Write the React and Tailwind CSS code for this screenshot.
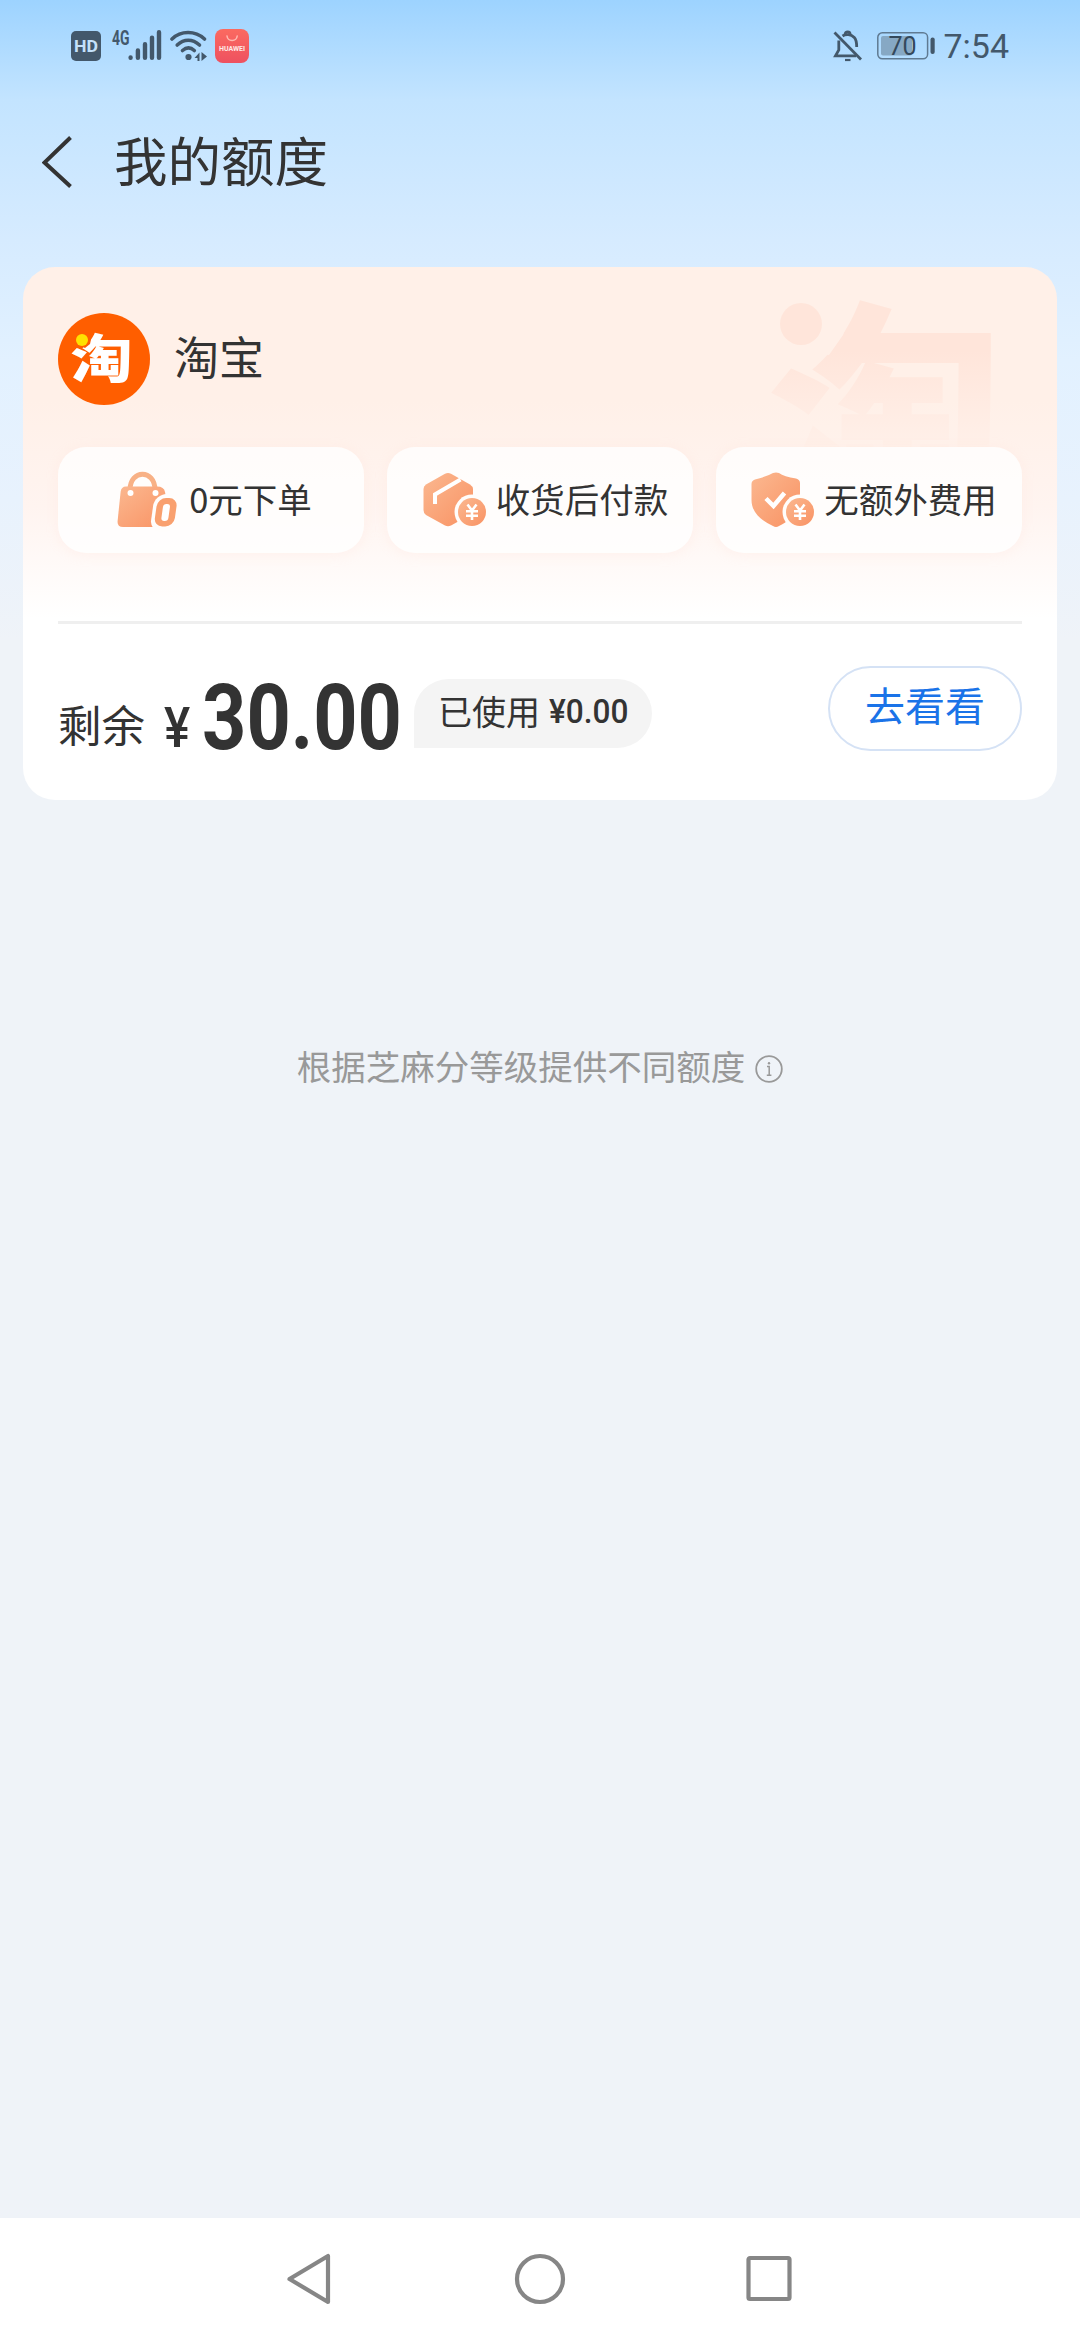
const ORANGE = 'url(#peach)';

const HdIcon = () => (
  <svg width="30" height="30" viewBox="0 0 30 30">
    <rect width="30" height="30" rx="5" fill="#43586b" />
    <text x="15" y="20.8" fontSize="16" fontWeight="700" textAnchor="middle" textLength="24" lengthAdjust="spacingAndGlyphs" fill="#c3e1fa" fontFamily="Roboto, sans-serif">HD</text>
  </svg>
);

const SignalIcon = () => (
  <svg className="overflow-visible" width="50" height="33" viewBox="0 0 50 33">
    <text x="0" y="15.5" fontSize="20" fontWeight="700" textLength="17.5" lengthAdjust="spacingAndGlyphs" fill="#43586b" fontFamily="Roboto, sans-serif">4G</text>
    <g stroke="#43586b" strokeWidth="4.4" strokeLinecap="round">
      <path d="M18.6 28.4v.4M25.9 21.5v7.3M33 15.2v13.6M40 8.6v20.2M47 3.2v25.6" />
    </g>
  </svg>
);

const WifiIcon = () => (
  <svg width="37" height="32" viewBox="0 0 37 32">
    <g fill="none" stroke="#43586b" strokeWidth="3.6" strokeLinecap="round">
      <path d="M2 9C11 .4 25 .4 34.5 9" />
      <path d="M7.2 15C14 8.700 22.500 8.700 29.500 15" />
      <path d="M12.500 20.500C16.500 17 20.500 17 24.300 20.500" />
    </g>
    <circle cx="18.500" cy="27" r="3.100" fill="#43586b" />
    <path d="M29.500 22.500v8.500h-2v-3h-3zM31.500 22l5.500 4.500-5.500 4.500z" fill="#43586b" />
  </svg>
);

const HuaweiIcon = () => (
  <svg width="34" height="34" viewBox="0 0 34 34">
    <defs>
      <linearGradient id="hw" x1="0" y1="0" x2="0" y2="1">
        <stop offset="0" stopColor="#fb6a60" />
        <stop offset="1" stopColor="#ee5160" />
      </linearGradient>
    </defs>
    <rect width="34" height="34" rx="8" fill="url(#hw)" />
    <path d="M12 7c.8 6 9.400 6 10.200 0" fill="none" stroke="#ffb9b0" strokeWidth="1.500" strokeLinecap="round" />
    <text x="17" y="22.300" fontSize="6.300" fontWeight="700" textAnchor="middle" textLength="26" lengthAdjust="spacingAndGlyphs" fill="#ffe9e6" fontFamily="Roboto, sans-serif">HUAWEI</text>
  </svg>
);

const BellOffIcon = () => (
  <svg width="30" height="32" viewBox="0 0 30 32" fill="none" stroke="#43586b" strokeWidth="2.800">
    <path d="M1.500 2.500l26.500 27" />
    <path d="M5.800 10.500v9.500L2.500 25.800H23" />
    <path d="M9.500 6C12.500 4 18 4 21.300 7.500c2.400 2.600 2.400 6 2.400 9.500" />
    <path d="M12 4.800c0-4 5.200-4 5.200 0" />
    <path d="M12 30h5.500" strokeWidth="2.200" />
  </svg>
);

const BatteryIcon = () => (
  <svg width="59" height="28" viewBox="0 0 59 28">
    <rect x=".8" y=".8" width="49.800" height="26" rx="4.500" fill="none" stroke="#5f7a92" strokeWidth="1.500" />
    <rect x="4" y="4" width="31" height="19.600" rx="2" fill="#86a8c4" />
    <text x="25.500" y="22.500" fontSize="25" textAnchor="middle" fill="#34495c" fontFamily="Roboto, sans-serif">70</text>
    <rect x="53.500" y="5.500" width="4.200" height="16.500" rx="2" fill="#43586b" />
  </svg>
);

const StatusBar = () => (
  <div className="flex h-[91px] items-center justify-between pl-[71px] pr-[71px]">
    <div className="flex items-center">
      <HdIcon />
      <div className="ml-[11px]"><SignalIcon /></div>
      <div className="ml-[8px]"><WifiIcon /></div>
      <div className="ml-[8px]"><HuaweiIcon /></div>
    </div>
    <div className="flex items-center">
      <BellOffIcon />
      <div className="ml-[14px]"><BatteryIcon /></div>
      <span className="ml-[7px] font-[Roboto,sans-serif] text-[34px] leading-[40px] text-[#43586b]">7:54</span>
    </div>
  </div>
);

const Header = () => (
  <header className="flex h-[141px] items-center pl-[42px]">
    <svg width="30" height="52" viewBox="0 0 30 52" fill="none" stroke="#333" strokeWidth="4">
      <path d="M28.500 1.500L2.500 26.500l26 24" />
    </svg>
    <h1 className="ml-[42px] pb-[5px] text-[53.500px] leading-[70px] text-[#333]">我的额度</h1>
  </header>
);

// Coin with the yuan sign, shared by the box and shield icons
const Coin = () => (
  <g>
    <circle cx="49" cy="40" r="17.500" fill="#fffdfb" />
    <circle cx="49" cy="40" r="14" fill={ORANGE} />
    <path d="M44.500 32.500L49 38.500l4.500-6M49 38.500V48M43 39.300h12M43 43.800h12" fill="none" stroke="#fff" strokeWidth="2.600" />
  </g>
);

const BagIcon = () => (
  <svg className="overflow-visible" width="60" height="58" viewBox="0 0 60 58">
    <path d="M13 19C13 -2 38 -2 38 19" fill="none" stroke="#f8b186" strokeWidth="5" />
    <path d="M9 15.500H40Q47 15.500 48 21L53 50Q54 56 48 56H6Q0 56 .6 50L3.600 21Q4.200 15.500 9 15.500z" fill={ORANGE} />
    <circle cx="13.500" cy="22" r="3" fill="#fff" />
    <circle cx="38.500" cy="22" r="3" fill="#fff" />
    <g transform="skewX(-8) translate(5.500 0)">
      <rect x="35.500" y="23" width="27" height="38" rx="12" fill="#fffdfc" />
      <rect x="39" y="27" width="20" height="28.500" rx="8.500" fill="#f9a06f" />
      <rect x="45.500" y="33" width="7" height="17" rx="3.200" fill="#fff" />
    </g>
  </svg>
);

const BoxIcon = () => (
  <svg width="65" height="56" viewBox="0 0 65 56">
    <path d="M22 1.800Q25 .2 28 1.800L47 12.500Q50 14.500 50 17V38Q50 41 47 43L28 53.500Q25 55 22 53.500L3 43Q.5 41.500 .5 38V17Q.5 14 3 12.500z" fill={ORANGE} />
    <path d="M12 32V22.500L37.500 7.500" fill="none" stroke="#fff" strokeWidth="4" />
    <Coin />
  </svg>
);

const ShieldIcon = () => (
  <svg width="65" height="56" viewBox="0 0 65 56">
    <path d="M22 1Q25 0 28 1Q33 4.500 45 6.500Q49 7.500 49 11V28C49 41 38 49 28 54Q25 56 22 54C11 49 .5 41 .5 28V12Q.5 8.500 4 7.500Q16 4.500 22 1z" fill={ORANGE} />
    <path d="M15 26.500l7.500 7.500L33.500 21" fill="none" stroke="#fff" strokeWidth="4.500" />
    <Coin />
  </svg>
);

const perks = [
  { label: '0元下单', icon: <BagIcon />, spacing: 'gap-[12px] pl-[7px]' },
  { label: '收货后付款', icon: <BoxIcon />, spacing: 'gap-[8px] pl-[11px]' },
  { label: '无额外费用', icon: <ShieldIcon />, spacing: 'gap-[8px] pl-[10px]' },
];

const TaobaoLogo = () => (
  <svg width="92" height="92" viewBox="0 0 92 92">
    <circle cx="46" cy="46" r="46" fill="#ff5e00" />
    <text x="12.500" y="64.500" fontSize="52" fontWeight="900" textLength="62" lengthAdjust="spacingAndGlyphs" fill="#fff" fontFamily="'Noto Sans CJK SC', sans-serif">淘</text>
    <path d="M12 28L20 17L34 22L32 31L27 35z" fill="#ff5e00" />
    <circle cx="24" cy="27" r="6" fill="#ffe100" />
  </svg>
);

const CreditCard = () => (
  <section className="relative mx-[23px] mt-[35px] h-[533px] overflow-hidden rounded-[32px] bg-linear-to-b from-[#fff0e8] from-25% via-[#fff4f0] via-45% to-white to-66% px-[35px]">
    {/* Faded brand mark behind the perks */}
    <svg className="absolute left-[740px] top-[20px]" width="250" height="160" viewBox="0 0 250 160">
      <defs>
        <linearGradient id="mark" x1="0" y1="0" x2="0" y2="160" gradientUnits="userSpaceOnUse">
          <stop offset=".4" stopColor="#ffe5da" />
          <stop offset="1" stopColor="#fff0e9" />
        </linearGradient>
      </defs>
      <text x="4" y="216" fontSize="236" fontWeight="900" fill="url(#mark)" fontFamily="'Noto Sans CJK SC', sans-serif">淘</text>
      <path d="M10 40L44 8L86 32L80 48L66 68L48 66z" fill="#fff0e8" />
      <circle cx="38" cy="37" r="21" fill="#ffe5da" />
    </svg>

    <div className="relative flex items-center pt-[46px]">
      <TaobaoLogo />
      <h2 className="ml-[24px] pb-[7px] text-[45px] leading-[60px] text-[#333]">淘宝</h2>
    </div>

    {/* Perks */}
    <div className="relative mt-[42px] grid grid-cols-3 gap-[23px]">
      {perks.map((perk) => (
        <div
          key={perk.label}
          className={`flex h-[106px] items-center justify-center rounded-[28px] bg-white/80 shadow-[0_2px_12px_rgba(255,225,210,0.25)] ${perk.spacing}`}
        >
          {perk.icon}
          <span className="whitespace-nowrap pb-[5px] text-[34.500px] leading-[44px] text-[#333]">{perk.label}</span>
        </div>
      ))}
    </div>

    <div className="mt-[68px] h-[3px] bg-[#efefef]" />

    {/* Balance */}
    <div className="mt-[42px] flex h-[85px] justify-between">
      <div className="flex items-end">
        <span className="mb-[5px] shrink-0 text-[43.500px] leading-[44px] text-[#333]">剩余</span>
        <span className="-mb-[6px] ml-[19px] inline-block w-[28px] shrink-0 origin-left scale-x-[0.88] font-[Roboto,sans-serif] text-[56px] font-medium leading-[58px] text-[#333]">¥</span>
        <span className="-mb-[9px] ml-[10px] inline-block w-[211px] shrink-0 origin-left scale-x-[0.85] font-[Roboto,sans-serif] text-[91px] font-bold leading-[84px] text-[#333]">30.00</span>
        <div className="mb-[3px] ml-px flex h-[69px] w-[238px] shrink-0 items-center rounded-full rounded-bl-none bg-[#f4f4f4] pb-[5px] pl-[24px]">
          <span className="whitespace-nowrap text-[34px] leading-[44px] text-[#333]">已使用</span>
          <span className="ml-[9px] inline-block origin-left scale-x-[0.93] font-[Roboto,sans-serif] text-[34px] font-medium leading-[44px] text-[#333]">¥0.00</span>
        </div>
      </div>
      <button className="w-[194px] rounded-full border-2 border-[#d5e2f5] pb-[9px] text-[40px] leading-[44px] text-[#1a73e8]">去看看</button>
    </div>
  </section>
);

const Hint = () => (
  <div className="mt-[239px] flex items-center justify-center gap-[10px] text-[#999]">
    <span className="text-[34.500px] leading-[52px]">根据芝麻分等级提供不同额度</span>
    <svg className="mt-[7px]" width="28" height="28" viewBox="0 0 28 28" fill="none" stroke="#999" strokeWidth="1.800">
      <circle cx="14" cy="14" r="12.800" />
      <path d="M12 11.500h2.200V20M11.800 20.200h4.600" strokeWidth="1.500" />
      <circle cx="14" cy="8.300" r="1.200" fill="#999" stroke="none" />
    </svg>
  </div>
);

const NavBar = () => (
  <nav className="mt-auto flex h-[122px] items-center justify-center bg-white">
    <svg width="506" height="52" viewBox="0 0 506 52" fill="none" stroke="#868686" strokeWidth="4.200" strokeLinejoin="round">
      <path d="M41 3v46L2.500 26z" />
      <circle cx="253" cy="26" r="23" />
      <rect x="461.500" y="5" width="41" height="41" rx="1.500" />
    </svg>
  </nav>
);

const App = () => {
  return (
    <div className="flex h-[2340px] w-[1080px] flex-col bg-[#eff3f8] bg-[linear-gradient(180deg,#9dd3ff_0px,#c3e4ff_100px,#d6ebff_240px,#e2f1ff_360px,#e8f2fd_500px,#eff3f8_640px)] font-['Noto_Sans_CJK_SC',sans-serif]">
      {/* Shared gradient for the perk icons */}
      <svg width="0" height="0" className="absolute">
        <defs>
          <linearGradient id="peach" x1="0" y1="0" x2="1" y2="1">
            <stop offset="0" stopColor="#fbb890" />
            <stop offset="1" stopColor="#f99263" />
          </linearGradient>
        </defs>
      </svg>

      <StatusBar />
      <Header />
      <CreditCard />
      <Hint />
      <NavBar />
    </div>
  );
};

export default App;
